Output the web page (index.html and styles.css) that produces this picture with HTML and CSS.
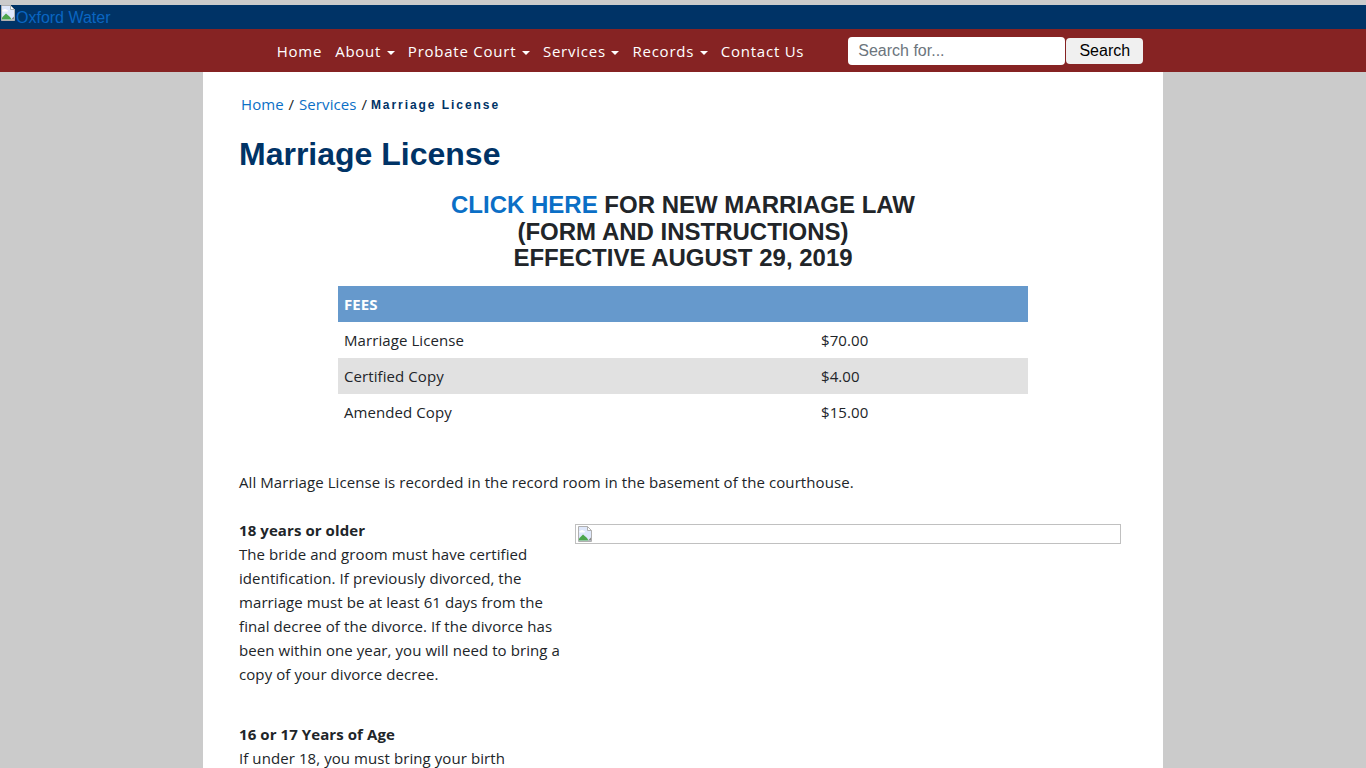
FILE: index.html
```html
<!DOCTYPE html>
<html lang="en">
<head>
    <meta charset="UTF-8">
    <title>Marriage License</title>
    <link rel="stylesheet" href="styles.css">
</head>
<body>

<header class="brand">
    <a href="#" class="brand-link">
        <svg class="broken" viewBox="0 0 16 16" width="16" height="16">
            <path d="M1.5 .5h9l4 4v11h-13z" fill="#dfe8fb" stroke="#b0b0b0"/>
            <path d="M10.5 .5v4h4z" fill="#fff" stroke="#b0b0b0"/>
            <path d="M3 5c1-1.500 3-1.500 4 0 1 0 1.500 1 .5 1.500h-4.500c-1 0-1-1.500 0-1.500z" fill="#fff"/>
            <path d="M2 14.500v-2l4-4 4 3.500 1.500 2.500z" fill="#4ca64c"/>
            <path d="M11 14.500l3-3v3z" fill="#8a8a8a"/>
        </svg>Oxford Water</a>
</header>

<nav class="navbar">
    <ul class="menu">
        <li><a href="#">Home</a></li>
        <li><a href="#">About <span class="caret"></span></a></li>
        <li><a href="#">Probate Court <span class="caret"></span></a></li>
        <li><a href="#">Services <span class="caret"></span></a></li>
        <li><a href="#">Records <span class="caret"></span></a></li>
        <li><a href="#">Contact Us</a></li>
    </ul>
    <form class="search">
        <input type="text" class="search-input" placeholder="Search for...">
        <button type="button" class="search-btn">Search</button>
    </form>
</nav>

<main class="content">
    <div class="crumbs">
        <a href="#">Home</a> / <a href="#">Services</a> / <span class="crumb-current">Marriage License</span>
    </div>
    <h1>Marriage License</h1>
    <h2 class="notice"><a href="#">CLICK HERE</a> FOR NEW MARRIAGE LAW<br>(FORM AND INSTRUCTIONS)<br>EFFECTIVE AUGUST 29, 2019</h2>

    <table class="fees">
        <tr class="fees-head"><th colspan="2">FEES</th></tr>
        <tr><td class="fee-name">Marriage License</td><td>$70.00</td></tr>
        <tr class="alt"><td class="fee-name">Certified Copy</td><td>$4.00</td></tr>
        <tr><td class="fee-name">Amended Copy</td><td>$15.00</td></tr>
    </table>

    <p class="recorded">All Marriage License is recorded in the record room in the basement of the courthouse.</p>

    <div class="columns">
        <div class="col-text">
            <p class="block"><strong>18 years or older</strong><br>
            The bride and groom must have certified identification. If previously divorced, the marriage must be at least 61 days from the final decree of the divorce. If the divorce has been within one year, you will need to bring a copy of your divorce decree.</p>
            <p class="block"><strong>16 or 17 Years of Age</strong><br>
            If under 18, you must bring your birth</p>
        </div>
        <div class="col-image">
            <div class="image-box">
                <svg class="broken" viewBox="0 0 16 16" width="16" height="16">
                    <path d="M1.500 .5h9l4 4v11h-13z" fill="#dfe8fb" stroke="#b0b0b0"/>
                    <path d="M10.500 .5v4h4z" fill="#fff" stroke="#b0b0b0"/>
                    <path d="M3 5c1-1.500 3-1.500 4 0 1 0 1.500 1 .5 1.500h-4.500c-1 0-1-1.500 0-1.500z" fill="#fff"/>
                    <path d="M2 14.500v-2l4-4 4 3.500 1.500 2.500z" fill="#4ca64c"/>
                    <path d="M11 14.500l3-3v3z" fill="#8a8a8a"/>
                </svg>
            </div>
        </div>
    </div>
</main>

</body>
</html>
```

FILE: styles.css
```css
html, body {
    height: 100%;
}
body {
    margin: 0;
    padding-top: 5px;
    box-sizing: border-box;
    display: flex;
    flex-direction: column;
    overflow: hidden;
    background-color: #cbcbcb;
    color: #212529;
    font-family: "Open Sans", sans-serif;
    font-size: 15px;
    line-height: 24px;
    letter-spacing: 0.08px;
}
a {
    color: #0b6fc6;
    text-decoration: none;
}
.brand {
    height: 24px;
    flex: none;
    background-color: #003366;
    font-family: "Liberation Sans", Arial, sans-serif;
    font-size: 16px;
    line-height: 25px;
    letter-spacing: 0;
}
.brand-link {
    display: flex;
    align-items: flex-start;
    color: #0a66c2;
}
.broken {
    display: block;
    flex: none;
}
.navbar {
    height: 43px;
    flex: none;
    background-color: #862323;
    display: flex;
    justify-content: center;
    align-items: center;
    box-sizing: border-box;
    padding-left: 54px;
}
.menu {
    display: flex;
    gap: 13px;
    list-style: none;
    margin: 0 44px 0 0;
    padding: 0;
    font-size: 15px;
    letter-spacing: 0.76px;
}
.menu a {
    color: #fff;
}
.caret {
    display: inline-block;
    width: 0;
    height: 0;
    margin-left: 1px;
    vertical-align: 2px;
    border-top: 4px solid #fff;
    border-left: 4px solid transparent;
    border-right: 4px solid transparent;
}
.search {
    display: flex;
    align-items: center;
    margin: 0;
}
.search-input {
    width: 217px;
    height: 28px;
    box-sizing: border-box;
    padding: 0 10px;
    border: 0;
    border-radius: 4px;
    font-family: "Liberation Sans", Arial, sans-serif;
    font-size: 16px;
    background-color: #fff;
}
.search-input::placeholder {
    color: #6c757d;
}
.search-btn {
    width: 77px;
    height: 26px;
    margin-left: 1px;
    padding: 0;
    border: 0;
    border-radius: 4px;
    background-color: #f0f0f0;
    color: #000;
    font-family: "Liberation Sans", Arial, sans-serif;
    font-size: 16px;
}
.content {
    flex: 1;
    width: 960px;
    box-sizing: border-box;
    margin: 0 auto;
    padding: 20px 42px 0 36px;
    background-color: #fff;
}
.crumbs {
    padding-left: 2px;
    line-height: 24px;
    word-spacing: 0.9px;
}
.crumb-current {
    margin-left: -1px;
    color: #003366;
    font-family: "Liberation Sans", Arial, sans-serif;
    font-size: 12px;
    font-weight: bold;
    letter-spacing: 1.95px;
    word-spacing: 0;
    vertical-align: 1px;
}
h1 {
    margin: 18px 0 0;
    color: #003366;
    font-family: "Liberation Sans", Arial, sans-serif;
    font-size: 32px;
    line-height: 38px;
    letter-spacing: 0;
}
.notice {
    margin: 19.3px 0 0;
    text-align: center;
    font-family: "Liberation Sans", Arial, sans-serif;
    font-size: 24px;
    line-height: 26.4px;
    font-weight: bold;
    letter-spacing: 0;
    padding-left: 6px;
}
.fees {
    width: 690px;
    margin: 14.7px 0 0 99px;
    border-collapse: collapse;
}
.fees th, .fees td {
    height: 36px;
    padding: 0 6px;
    text-align: left;
}
.fees-head {
    background-color: #6699cc;
    color: #fff;
}
.fee-name {
    width: 465px;
}
.alt {
    background-color: #e1e1e1;
}
.recorded {
    margin: 40px 0 0;
}
.columns {
    display: flex;
    margin-top: 24px;
}
.col-text {
    width: 336px;
    flex: none;
    padding-right: 12px;
    box-sizing: border-box;
}
.block {
    margin: 0 0 36px;
}
.col-image {
    flex: 1;
}
.image-box {
    height: 20px;
    box-sizing: border-box;
    margin-top: 6px;
    border: 1px solid #c0c0c0;
    padding: 1px;
}
```
